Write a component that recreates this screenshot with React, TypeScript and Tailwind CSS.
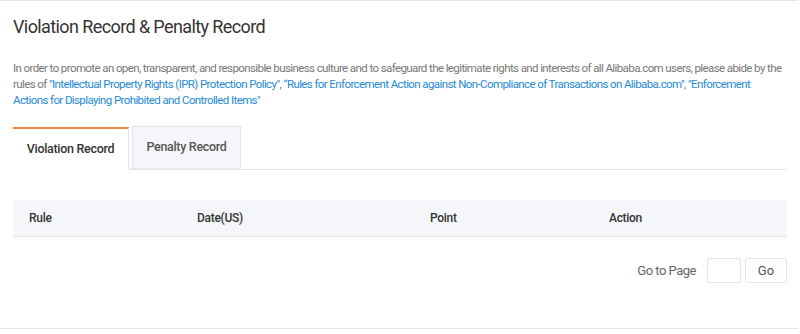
export default function App() {
  return (
    <div className="w-[800px] h-[334px] bg-white" style={{ fontFamily: "Roboto, 'Liberation Sans', sans-serif" }}>
      <div className="w-[798px] h-[329px] border-t border-b border-[#e3e5ea] px-[13px] pt-[14px]">
        <h1 className="text-[18px] leading-[24px] text-[#333] tracking-[-0.6px]">Violation Record &amp; Penalty Record</h1>
        <p className="mt-[21px] text-[11.5px] leading-[16px] text-[#777] tracking-[-0.6px]">
          In order to promote an open, transparent, and responsible business culture and to safeguard the legitimate rights and interests of all Alibaba.com users, please abide by the rules of{" "}
          <span className="text-[#1f8ad6]">"Intellectual Property Rights (IPR) Protection Policy"</span>,{" "}
          <span className="text-[#1f8ad6]">“Rules for Enforcement Action against Non-Compliance of Transactions on Alibaba.com"</span>,{" "}
          <span className="text-[#1f8ad6]">"Enforcement Actions for Displaying Prohibited and Controlled Items"</span>
        </p>
        <div className="mt-[18px] flex items-end border-b border-[#e3e5ea] w-[774px]">
          <div className="w-[116px] h-[43px] border-t-2 border-[#f08a3c] border-r border-r-[#e3e5ea] bg-white -mb-px flex items-center justify-center text-[12.5px] font-medium text-[#333] tracking-[-0.3px]">
            Violation Record
          </div>
          <div className="ml-[3px] w-[109px] h-[43px] border border-[#e3e5ea] bg-[#f5f6f9] flex items-center justify-center text-[12.5px] font-medium text-[#555] tracking-[-0.3px]">
            Penalty Record
          </div>
        </div>
        <div className="mt-[30px] w-[774px] h-[37px] bg-[#f5f6f9] border-b border-[#e6e8ec] grid grid-cols-[168px_233px_179px_1fr] items-center text-[12px] font-medium text-[#333] tracking-[-0.3px]">
          <div className="pl-[16px]">Rule</div>
          <div className="pl-[16px]">Date(US)</div>
          <div className="pl-[16px]">Point</div>
          <div className="pl-[16px]">Action</div>
        </div>
        <div className="mt-[21px] w-[774px] flex items-center justify-end">
          <span className="text-[13px] text-[#666] mr-[11px] tracking-[-0.5px]">Go to Page</span>
          <div className="w-[34px] h-[25px] border border-[#e3e5ea] rounded-[2px]" />
          <div className="ml-[4px] w-[42px] h-[25px] border border-[#e3e5ea] rounded-[3px] flex items-center justify-center text-[13px] text-[#555]">Go</div>
        </div>
      </div>
    </div>
  );
}
